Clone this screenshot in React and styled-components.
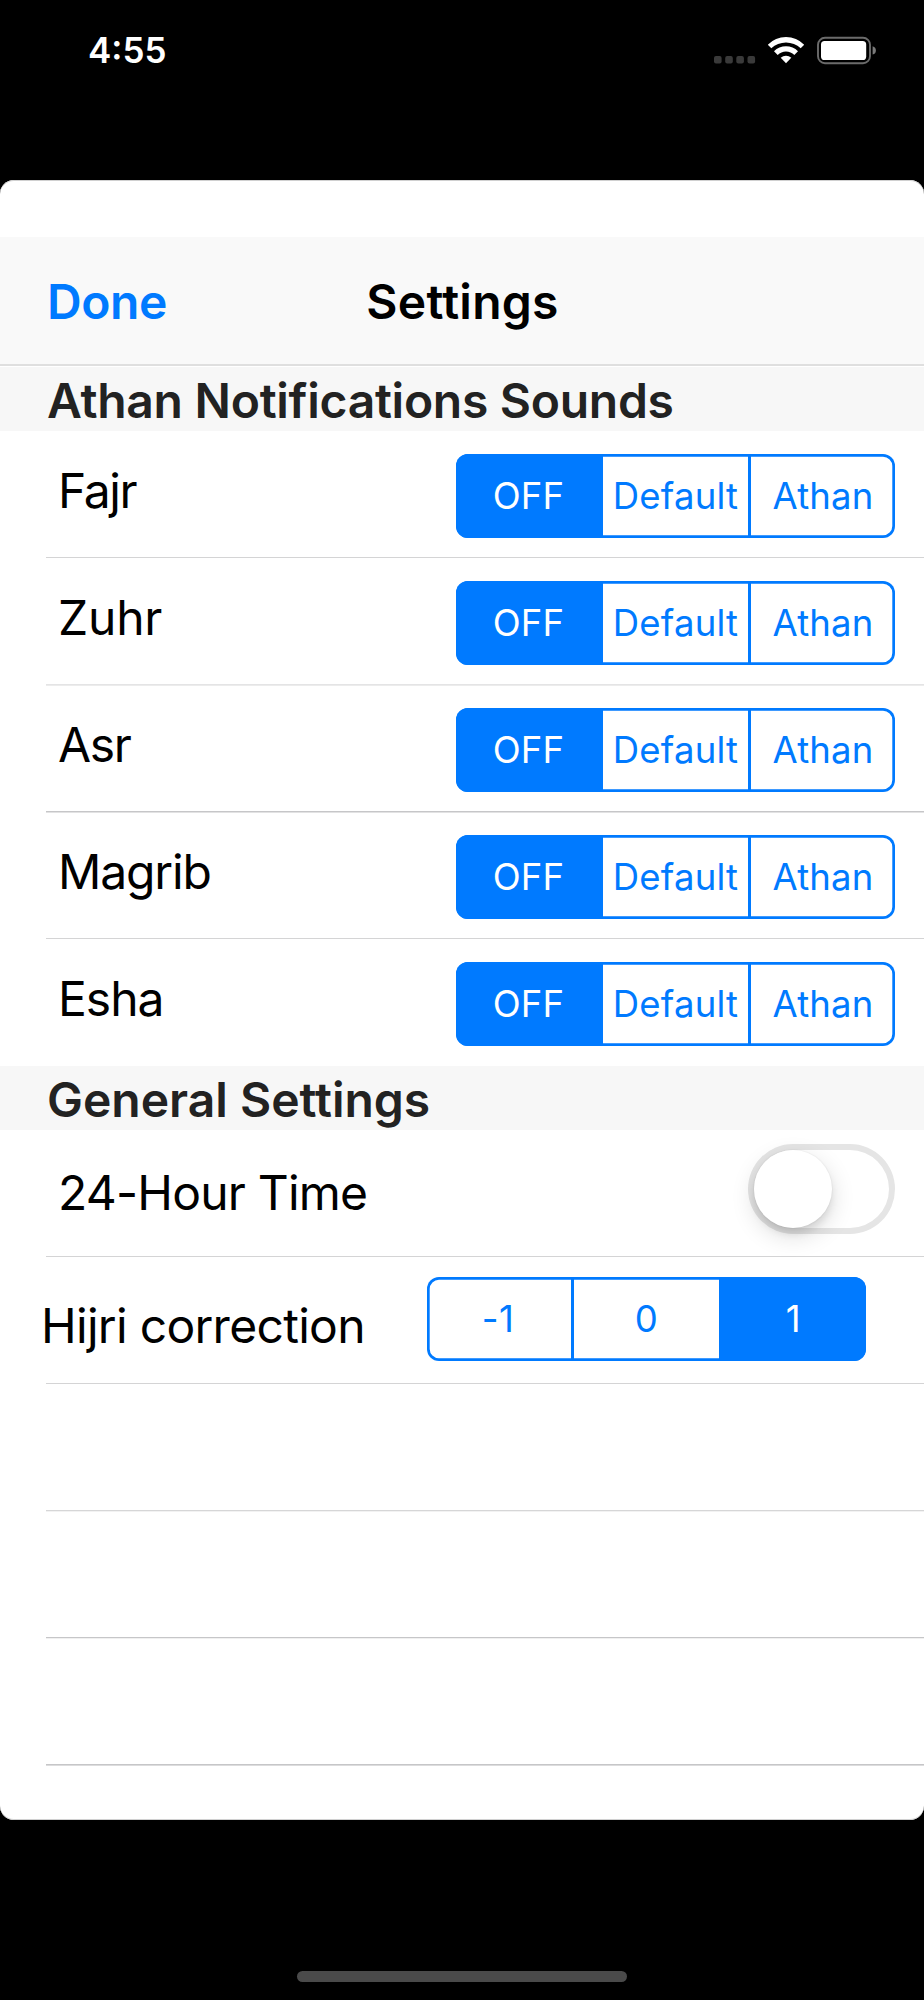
import React, { useState } from "react";
import styled, { createGlobalStyle, ThemeProvider } from "styled-components";

const theme = {
  colors: {
    primary: "#007aff",
    text: "#000000",
    heading: "#222222",
    bar: "#f9f9f9",
    section: "#f7f7f7",
    separator: "#d4d4d5",
    track: "#e5e5e5",
  },
  fontSize: {
    s: "35px",
    m: "36.5px",
    l: "48px",
  },
};

const GlobalStyle = createGlobalStyle`
  * {
    box-sizing: border-box;
  }
  body {
    margin: 0;
    background: #000;
    font-family: Inter, "Liberation Sans", sans-serif;
  }
  button {
    margin: 0;
    padding: 0;
    border: none;
    background: none;
    font-family: inherit;
    cursor: pointer;
  }
`;

const Screen = styled.div`
  width: 924px;
  height: 2000px;
  display: flex;
  flex-direction: column;
  background: #000;
  overflow: hidden;
`;

// STATUS BAR
const StatusBar = styled.header`
  height: 180px;
  padding: 33px 47px 0 88px;
  display: flex;
  align-items: flex-start;
  justify-content: space-between;
  color: #fff;
`;
const Time = styled.span`
  font-size: ${theme.fontSize.s};
  line-height: 35px;
  font-weight: 600;
`;
const StatusIcons = styled.div`
  display: flex;
  padding-top: 3px;
`;
const Cellular = styled.svg`
  margin-right: 11px;
`;
const Wifi = styled.svg`
  margin-right: 12px;
`;

// SHEET
const Sheet = styled.main`
  height: 1640px;
  padding-top: 57px;
  background: #fff;
  border-radius: 14px;
  box-shadow: inset 0 1px #d0d0d0, inset 0 -1px #d0d0d0;
  overflow: hidden;
`;
const NavBar = styled.nav`
  height: 129px;
  padding: 41px 46px 0 47px;
  margin-bottom: 1px;
  display: grid;
  grid-template-columns: 1fr auto 1fr;
  align-items: start;
  justify-items: start;
  background: ${({ theme }) => theme.colors.bar};
  border-bottom: 2px solid #dfdfdf;
`;
const DoneButton = styled.button`
  color: ${({ theme }) => theme.colors.primary};
  font-size: ${({ theme }) => theme.fontSize.l};
  font-weight: 600;
  line-height: 48px;
  letter-spacing: -0.4px;
`;
const Title = styled.h1`
  margin: 0;
  font-size: ${({ theme }) => theme.fontSize.l};
  font-weight: 600;
  line-height: 48px;
  letter-spacing: 0.25px;
`;
const SectionHeader = styled.h2`
  margin: 0;
  height: 64px;
  padding: 10px 0 0 47px;
  background: ${({ theme }) => theme.colors.section};
  color: ${({ theme }) => theme.colors.heading};
  font-size: ${({ theme }) => theme.fontSize.l};
  font-weight: 600;
  line-height: 48px;
  letter-spacing: ${({ $tracking }) => $tracking || "0"};
`;

// ROWS
const Row = styled.div`
  height: 127px;
  margin-left: 46px;
  padding-right: ${({ $inset }) => $inset || "29px"};
  display: flex;
  align-items: flex-start;
  justify-content: space-between;
  border-bottom: 1px solid
    ${({ $line, theme }) => $line || theme.colors.separator};
  box-shadow: ${({ $edge }) => ($edge ? `0 1px ${$edge}` : "none")};
`;
const Label = styled.span`
  padding-top: ${({ $top }) => $top || "36px"};
  margin-left: ${({ $left }) => $left || "12px"};
  color: ${({ theme }) => theme.colors.text};
  font-size: ${({ theme }) => theme.fontSize.l};
  line-height: 48px;
  letter-spacing: ${({ $tracking }) => $tracking};
  white-space: nowrap;
`;

// SEGMENTED CONTROL
const SegmentGroup = styled.div`
  width: 439px;
  height: 84px;
  margin-top: ${({ $top }) => $top || "23px"};
  display: grid;
  grid-template-columns: ${({ $columns }) => $columns};
  border-radius: 12px;
  box-shadow: inset 0 0 0 2.7px ${({ theme }) => theme.colors.primary};
  overflow: hidden;
`;
const Segment = styled.button`
  color: ${({ $active, theme }) => ($active ? "#fff" : theme.colors.primary)};
  background: ${({ $active, theme }) =>
    $active ? theme.colors.primary : "transparent"};
  border-left: ${({ $divider, theme }) =>
    $divider ? `3px solid ${theme.colors.primary}` : "none"};
  padding-right: ${({ $first }) => ($first ? "2px" : "0")};
  padding-left: ${({ $last }) => ($last ? "2px" : "0")};
  font-size: ${({ theme }) => theme.fontSize.m};
  letter-spacing: ${({ $tracking }) => $tracking || "0"};
`;

// SWITCH
const Track = styled.button`
  width: 147px;
  height: 90px;
  margin-top: 14px;
  padding: 6px;
  display: flex;
  justify-content: ${({ $on }) => ($on ? "flex-end" : "flex-start")};
  border-radius: 45px;
  background: ${({ $on, theme }) => ($on ? theme.colors.primary : "#fff")};
  box-shadow: inset 0 0 0 6px
    ${({ $on, theme }) => ($on ? theme.colors.primary : theme.colors.track)};
`;
const Knob = styled.span`
  width: 78px;
  height: 78px;
  border-radius: 50%;
  background: #fff;
  box-shadow: 0 8px 24px rgba(0, 0, 0, 0.14), 0 6px 8px -1px rgba(0, 0, 0, 0.1),
    0 0 1px 1px rgba(0, 0, 0, 0.03);
`;

const HomeArea = styled.footer`
  flex: 1;
  display: flex;
  align-items: flex-end;
  justify-content: center;
  padding-bottom: 18px;
`;
const HomeIndicator = styled.div`
  width: 330px;
  height: 11px;
  border-radius: 6px;
  background: #4a4a4a;
`;

const sounds = ["OFF", "Default", "Athan"];
const corrections = ["-1", "0", "1"];

const prayers = [
  { name: "Fajr", tracking: "-1.4px" },
  { name: "Zuhr", tracking: "-0.2px", line: "#e4e4e5", edge: "#ececec" },
  { name: "Asr", tracking: "-1.3px", line: "#c6c6c8", edge: "#e2e2e3" },
  { name: "Magrib", tracking: "-1.15px" },
  { name: "Esha", tracking: "-1px", line: "transparent" },
];

const emptyRows = [
  { line: "#d6d6d7", edge: "#f2f2f2" },
  { line: "#c6c6c8", edge: "#f0f0f0" },
  { line: "#c6c6c8", edge: "#dcdcdd" },
];

const SegmentedControl = ({
  options,
  value,
  onChange,
  columns,
  top,
  tracking,
}) => {
  const selected = options.indexOf(value);
  return (
    <SegmentGroup $columns={columns} $top={top}>
      {options.map((option, i) => (
        <Segment
          key={option}
          $active={i === selected}
          $first={i === 0}
          $last={i === options.length - 1 && i === selected}
          $divider={i > 0 && i !== selected && i - 1 !== selected}
          $tracking={tracking}
          onClick={() => onChange(option)}
        >
          {option}
        </Segment>
      ))}
    </SegmentGroup>
  );
};

const StatusBarIcons = () => (
  <StatusIcons>
    <Cellular width="43" height="29" viewBox="0 0 43 29" fill="#3a3a3a">
      <rect x="1" y="20" width="7.6" height="7.4" rx="2" />
      <rect x="12.2" y="20" width="7.6" height="7.4" rx="2" />
      <rect x="23.3" y="20" width="7.6" height="7.4" rx="2" />
      <rect x="34.5" y="20" width="7.6" height="7.4" rx="2" />
    </Cellular>
    <Wifi width="38" height="29" viewBox="0 0 38 29" fill="#fff">
      <path d="M.8 8.7A25.4 25.4 0 0 1 37.2 8.7L33.7 12.3A21.5 21.5 0 0 0 4.3 12.3Z" />
      <path d="M7 15.3A16.6 16.6 0 0 1 31 15.3L27.3 19A11.6 11.6 0 0 0 10.7 19Z" />
      <path d="M13.7 21.8A8.2 8.2 0 0 1 24.3 21.8L19 27.3Z" />
    </Wifi>
    <svg width="60" height="29" viewBox="0 0 60 29">
      <rect
        x="1"
        y="1.8"
        width="52"
        height="25.4"
        rx="7"
        fill="none"
        stroke="#6b6b6b"
        strokeWidth="1.9"
      />
      <rect x="4" y="5" width="45.2" height="19" rx="3.6" fill="#fff" />
      <path d="M55.6 10.2Q58.9 11.2 58.9 14.4T55.6 18.6Z" fill="#7a7a7a" />
    </svg>
  </StatusIcons>
);

const App = () => {
  const [alerts, setAlerts] = useState({});
  const [is24Hour, setIs24Hour] = useState(false);
  const [correction, setCorrection] = useState("1");

  return (
    <ThemeProvider theme={theme}>
      <GlobalStyle />
      <Screen>
        <StatusBar>
          <Time>4:55</Time>
          <StatusBarIcons />
        </StatusBar>
        <Sheet>
          <NavBar>
            <DoneButton>Done</DoneButton>
            <Title>Settings</Title>
          </NavBar>
          <SectionHeader $tracking="-0.28px">
            Athan Notifications Sounds
          </SectionHeader>
          {prayers.map(({ name, tracking, line, edge }) => (
            <Row key={name} $line={line} $edge={edge}>
              <Label $tracking={tracking}>{name}</Label>
              <SegmentedControl
                options={sounds}
                columns="147px 145px 147px"
                tracking="0.2px"
                value={alerts[name] || "OFF"}
                onChange={(sound) => setAlerts({ ...alerts, [name]: sound })}
              />
            </Row>
          ))}
          <SectionHeader>General Settings</SectionHeader>
          <Row>
            <Label $tracking="-0.78px" $top="39px">
              24-Hour Time
            </Label>
            <Track $on={is24Hour} onClick={() => setIs24Hour(!is24Hour)}>
              <Knob />
            </Track>
          </Row>
          <Row $inset="58px">
            <Label $tracking="-0.7px" $top="45px" $left="-5px">
              Hijri correction
            </Label>
            <SegmentedControl
              options={corrections}
              columns="144px 148px 147px"
              top="20px"
              tracking="0.5px"
              value={correction}
              onChange={setCorrection}
            />
          </Row>
          {emptyRows.map(({ line, edge }, i) => (
            <Row key={i} $line={line} $edge={edge} />
          ))}
        </Sheet>
        <HomeArea>
          <HomeIndicator />
        </HomeArea>
      </Screen>
    </ThemeProvider>
  );
};

export default App;
